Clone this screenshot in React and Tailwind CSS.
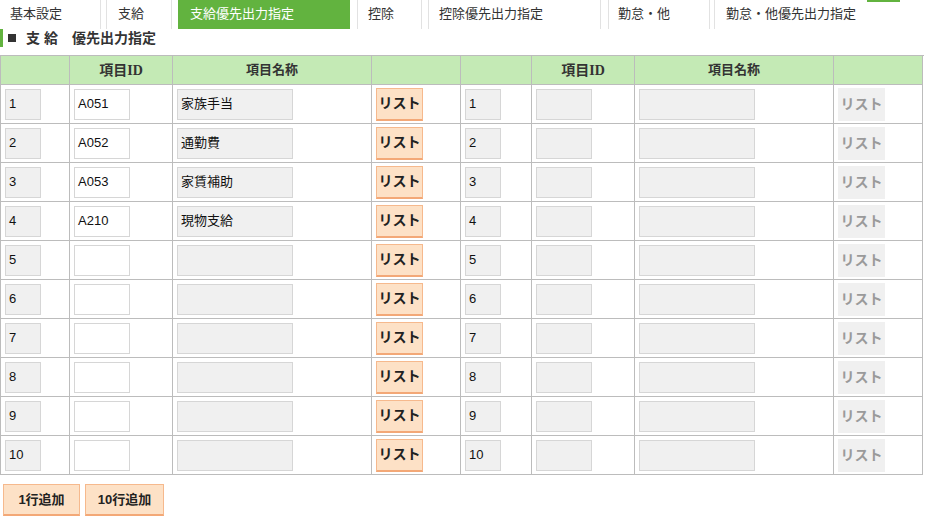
import React from "react";

const jp = { fontFamily: '"Liberation Sans", "Noto Sans CJK JP", sans-serif' };

const leftRows = [
  { n: "1", id: "A051", name: "家族手当" },
  { n: "2", id: "A052", name: "通勤費" },
  { n: "3", id: "A053", name: "家賃補助" },
  { n: "4", id: "A210", name: "現物支給" },
  { n: "5", id: "", name: "" },
  { n: "6", id: "", name: "" },
  { n: "7", id: "", name: "" },
  { n: "8", id: "", name: "" },
  { n: "9", id: "", name: "" },
  { n: "10", id: "", name: "" },
];

function Cell({ children }) {
  return (
    <div className="h-[39px] border-b border-r border-[#bcbcbc] flex items-center pl-[4px] bg-white">
      {children}
    </div>
  );
}

function Box({ w, value, white }) {
  return (
    <div
      className={
        "h-[31px] border border-[#d6d6d6] flex items-center pl-[3px] text-[13px] text-[#111] " +
        (white ? "bg-white " : "bg-[#f0f0f0] ") +
        w
      }
    >
      {value}
    </div>
  );
}

function ListBtn({ disabled }) {
  if (disabled) {
    return (
      <div className="w-[47px] h-[33px] bg-[#f0f0f0] flex items-center justify-center text-[14px] font-bold text-[#9a9a9a]">
        リスト
      </div>
    );
  }
  return (
    <div className="w-[47px] h-[33px] bg-[#fde1c6] border border-[#f6b98d] border-b-2 border-b-[#f3a877] flex items-center justify-center text-[14px] font-bold text-[#222]">
      リスト
    </div>
  );
}

export default function App() {
  const headCell = "h-[29px] border-b border-r border-[#bcbcbc] bg-[#c4eab5] flex items-center justify-center text-[13px] font-bold text-[#333]";
  const serif = { fontFamily: '"Liberation Serif", "Noto Sans CJK JP", serif' };
  return (
    <div className="w-[925px] h-[531px] bg-white relative overflow-hidden" style={jp}>
      {/* Tabs */}
      <div className="flex h-[29px] text-[13px] text-[#333]">
        <div className="w-[101px] border-r border-[#e2e2e2] flex items-center pl-[10px] pb-[2px]">基本設定</div>
        <div className="ml-[5px] w-[66px] border-x border-[#e2e2e2] flex items-center pl-[11px] pb-[2px]">支給</div>
        <div className="ml-[6px] w-[172px] bg-[#62b33f] text-white flex items-center pl-[12px] pb-[2px]">支給優先出力指定</div>
        <div className="ml-[7px] w-[65px] border-x border-[#e2e2e2] flex items-center pl-[10px] pb-[2px]">控除</div>
        <div className="ml-[6px] w-[173px] border-x border-[#e2e2e2] flex items-center pl-[10px] pb-[2px]">控除優先出力指定</div>
        <div className="ml-[7px] w-[102px] border-x border-[#e2e2e2] flex items-center pl-[9px] pb-[2px]">勤怠・他</div>
        <div className="ml-[4px] flex-1 border-l border-[#e2e2e2] flex items-center pl-[11px] pb-[2px]">勤怠・他優先出力指定</div>
      </div>
      <div className="absolute left-[867px] top-0 w-[33px] h-[2px] bg-[#62b33f]" />

      {/* Heading */}
      <div className="flex items-center h-[18px]">
        <div className="w-[3px] h-[18px] bg-[#62b33f]" />
        <div className="ml-[5px] w-[8px] h-[8px] bg-[#333]" />
        <span className="ml-[10px] text-[14px] font-bold text-[#333] whitespace-pre">支 給　優先出力指定</span>
      </div>

      {/* Table */}
      <div className="mt-[8px] w-[924px] border-l border-t border-[#bcbcbc] grid grid-cols-[69px_103px_199px_89px_71px_103px_199px_89px]">
        <div className={headCell}></div>
        <div className={headCell} style={serif}>
          <span className="font-bold text-[14px]">項目ID</span>
        </div>
        <div className={headCell}>項目名称</div>
        <div className={headCell}></div>
        <div className={headCell}></div>
        <div className={headCell} style={serif}>
          <span className="font-bold text-[14px]">項目ID</span>
        </div>
        <div className={headCell}>項目名称</div>
        <div className={headCell}></div>

        {leftRows.map((r) => (
          <React.Fragment key={r.n}>
            <Cell><Box w="w-[36px]" value={r.n} /></Cell>
            <Cell><Box w="w-[56px]" value={r.id} white /></Cell>
            <Cell><Box w="w-[116px]" value={r.name} /></Cell>
            <Cell><ListBtn /></Cell>
            <Cell><Box w="w-[36px]" value={r.n} /></Cell>
            <Cell><Box w="w-[56px]" value="" /></Cell>
            <Cell><Box w="w-[116px]" value="" /></Cell>
            <Cell><ListBtn disabled /></Cell>
          </React.Fragment>
        ))}
      </div>

      {/* Bottom buttons */}
      <div className="flex gap-[5px] ml-[3px] mt-[9px]">
        <div className="w-[77px] h-[32px] bg-[#fde1c6] border border-[#f6b98d] border-b-2 border-b-[#f3a877] flex items-center justify-center text-[13px] font-bold text-[#222]">
          1行追加
        </div>
        <div className="w-[79px] h-[32px] bg-[#fde1c6] border border-[#f6b98d] border-b-2 border-b-[#f3a877] flex items-center justify-center text-[13px] font-bold text-[#222]">
          10行追加
        </div>
      </div>
    </div>
  );
}
